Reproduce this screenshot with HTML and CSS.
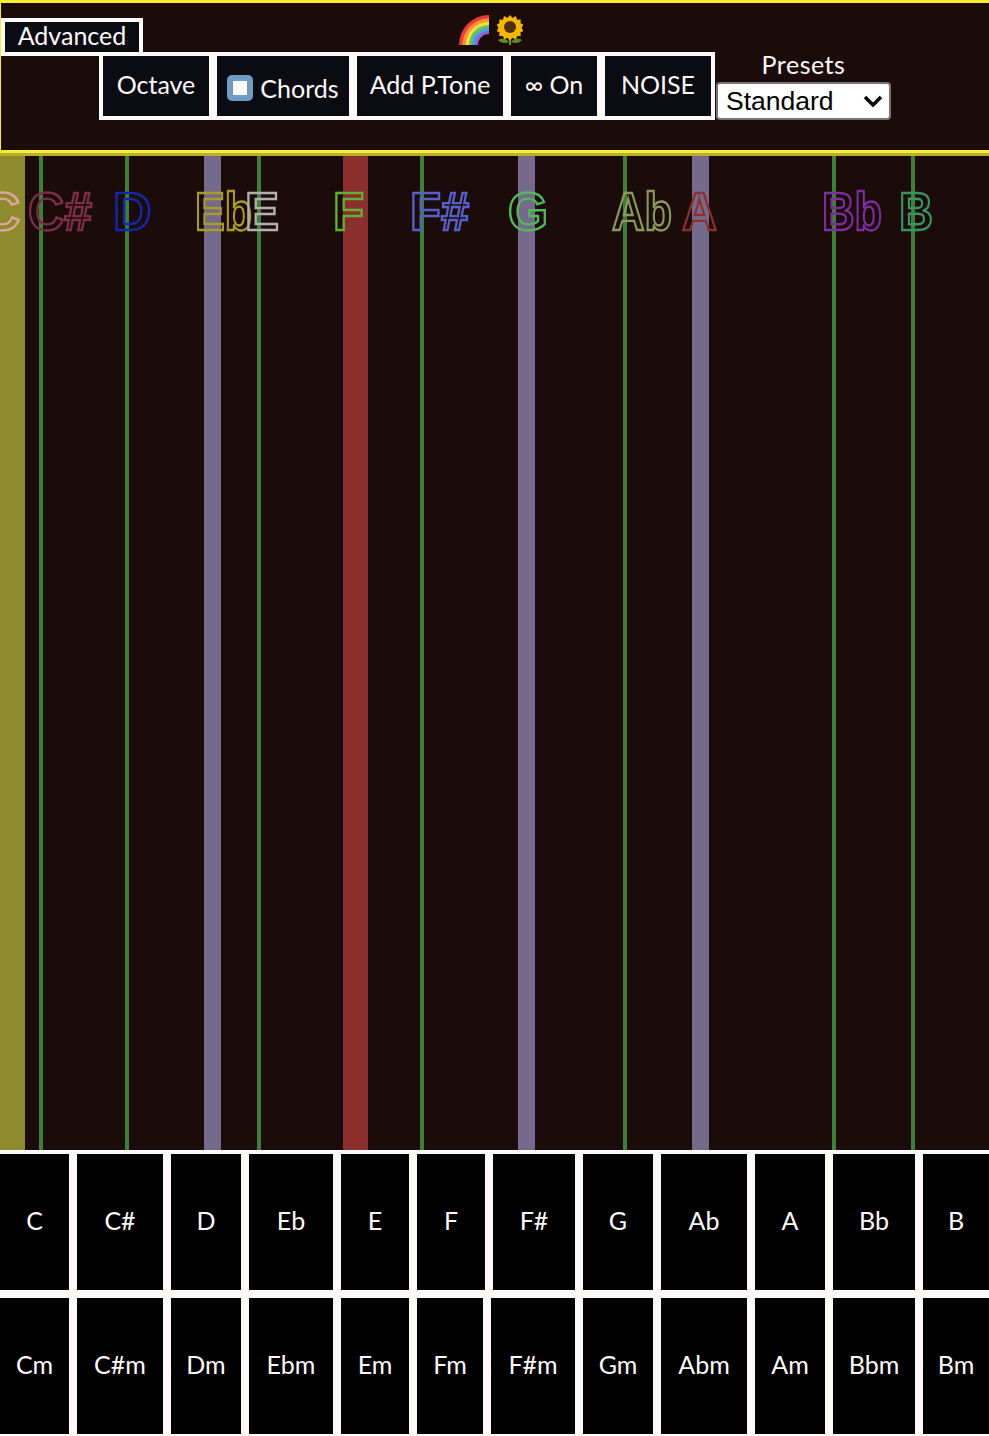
FILE: index.html
```html
<!DOCTYPE html>
<html lang="en">
	<head>
		<meta charset="UTF-8" />
		<title>Chord Strings</title>
		<link rel="stylesheet" href="styles.css">
	</head>
	<body>
		<header class="panel">
			<div class="top-row">
				<button class="ctl advanced">Advanced</button>
				<div class="emojis">
					<svg class="rainbow" viewBox="0 0 30 30" width="30" height="30">
						<path d="M0 30A30 30 0 0 1 30 0V30Z" fill="#ef3b3b"/>
						<path d="M3.500 30A26.500 26.500 0 0 1 30 3.500V30Z" fill="#f59a2c"/>
						<path d="M7 30A23 23 0 0 1 30 7V30Z" fill="#f8e04a"/>
						<path d="M10 30A20 20 0 0 1 30 10V30Z" fill="#62c455"/>
						<path d="M13 30A17 17 0 0 1 30 13V30Z" fill="#4aa3e8"/>
						<path d="M16 30A14 14 0 0 1 30 16V30Z" fill="#9a5fd0"/>
						<path d="M19 30A11 11 0 0 1 30 19V30Z" fill="#1b0c0b"/>
					</svg>
					<svg class="sunflower" viewBox="0 0 26 30" width="26" height="30">
						<path d="M12 21h2v9h-2z" fill="#6f8f1c"/>
						<path d="M12 27C9 23 4 23 1 25c2 3 7 4 11 2zM14 27c3-4 8-4 11-2-2 3-7 4-11 2z" fill="#5f8a1e"/>
						<path d="M13 0l2.500 3 3.500-2 1 3.700 3.800-.2-.3 3.800 3 1.200-2 3.300 2 3.200-3 1.300.3 3.700-3.800-.1-1 3.600-3.500-1.800-2.500 2.800-2.500-2.800-3.500 1.800-1-3.600-3.800.1.300-3.700-3-1.300 2-3.200-2-3.300 3-1.200-.3-3.800 3.800.2 1-3.700 3.500 2z" fill="#f5b800"/>
						<circle cx="13" cy="12" r="6" fill="#4d3108"/>
					</svg>
				</div>
			</div>
			<div class="controls">
				<button class="ctl octave">Octave</button>
				<button class="ctl chords">
					<svg class="stop" viewBox="0 0 26 26" width="26" height="26">
						<rect width="26" height="26" rx="5" fill="#6f9ac2"/>
						<rect x="6" y="6" width="14" height="14" fill="#fff"/>
					</svg>
					Chords
				</button>
				<button class="ctl ptone">Add P.Tone</button>
				<button class="ctl loop">∞ On</button>
				<button class="ctl noise">NOISE</button>
				<div class="presets">
					<label for="preset">Presets</label>
					<div class="select-wrap">
						<select id="preset">
							<option>Standard</option>
						</select>
						<svg class="chevron" viewBox="0 0 20 12" width="20" height="12">
							<path d="M2 2l8 8 8-8" fill="none" stroke="#000" stroke-width="3.500"/>
						</svg>
					</div>
				</div>
			</div>
		</header>

		<svg class="strings" viewBox="0 0 989 994" width="989" height="994">
			<rect class="s-yellow" x="0" y="0" width="25" height="994"/>
			<rect class="s-green" x="39" y="0" width="4" height="994"/>
			<rect class="s-green" x="125" y="0" width="4" height="994"/>
			<rect class="s-violet" x="204" y="0" width="17" height="994"/>
			<rect class="s-green" x="257" y="0" width="4" height="994"/>
			<rect class="s-red" x="343" y="0" width="25" height="994"/>
			<rect class="s-green" x="420" y="0" width="4" height="994"/>
			<rect class="s-violet" x="518" y="0" width="17" height="994"/>
			<rect class="s-green" x="623" y="0" width="4" height="994"/>
			<rect class="s-violet" x="692" y="0" width="17" height="994"/>
			<rect class="s-green" x="832" y="0" width="4" height="994"/>
			<rect class="s-green" x="911" y="0" width="4" height="994"/>

			<text class="note n-c" x="-18" y="74">C</text>
			<text class="note n-cs" x="28" y="74" textLength="64" lengthAdjust="spacingAndGlyphs">C#</text>
			<text class="note n-d" x="113" y="74">D</text>
			<text class="note n-eb" x="195" y="74" textLength="57" lengthAdjust="spacingAndGlyphs">Eb</text>
			<text class="note n-e" x="245" y="74" textLength="34" lengthAdjust="spacingAndGlyphs">E</text>
			<text class="note n-f" x="333" y="74" textLength="31" lengthAdjust="spacingAndGlyphs">F</text>
			<text class="note n-fs" x="410" y="74" textLength="59" lengthAdjust="spacingAndGlyphs">F#</text>
			<text class="note n-g" x="508" y="74" textLength="40" lengthAdjust="spacingAndGlyphs">G</text>
			<text class="note n-ab" x="612" y="74" textLength="60" lengthAdjust="spacingAndGlyphs">Ab</text>
			<text class="note n-a" x="682" y="74" textLength="35" lengthAdjust="spacingAndGlyphs">A</text>
			<text class="note n-bb" x="822" y="74" textLength="60" lengthAdjust="spacingAndGlyphs">Bb</text>
			<text class="note n-b" x="899" y="74" textLength="34" lengthAdjust="spacingAndGlyphs">B</text>
		</svg>

		<div class="pads">
			<div class="pad-row row-major">
				<button class="pad">C</button>
				<button class="pad">C#</button>
				<button class="pad">D</button>
				<button class="pad">Eb</button>
				<button class="pad">E</button>
				<button class="pad">F</button>
				<button class="pad">F#</button>
				<button class="pad">G</button>
				<button class="pad">Ab</button>
				<button class="pad">A</button>
				<button class="pad">Bb</button>
				<button class="pad">B</button>
			</div>
			<div class="pad-row row-minor">
				<button class="pad">Cm</button>
				<button class="pad">C#m</button>
				<button class="pad">Dm</button>
				<button class="pad">Ebm</button>
				<button class="pad">Em</button>
				<button class="pad">Fm</button>
				<button class="pad">F#m</button>
				<button class="pad">Gm</button>
				<button class="pad">Abm</button>
				<button class="pad">Am</button>
				<button class="pad">Bbm</button>
				<button class="pad">Bm</button>
			</div>
		</div>
	</body>
</html>
```

FILE: styles.css
```css
body {
	margin: 0;
	background-color: #fffafa;
	font-family: Lato, "Open Sans", sans-serif;
}
button {
	font-family: inherit;
	padding: 0;
	color: #fffafa;
}
.panel {
	height: 147px;
	background-color: #1b0c0b;
	border-top: 3px solid #f5ee35;
	border-bottom: 3px solid #f5ee35;
	border-left: 1px solid #f5ee35;
}
.top-row {
	display: flex;
	height: 49px;
}
.ctl {
	background-color: #0b0b12;
	border: 4px solid #fffafa;
	font-size: 25px;
	line-height: 30px;
}
.advanced {
	width: 142px;
	height: 38px;
	margin-top: 15px;
	padding-bottom: 4px;
	line-height: 24px;
}
.emojis {
	display: flex;
	gap: 8px;
	margin-top: 12px;
	margin-left: 316px;
	height: 30px;
}
.controls {
	display: flex;
	align-items: flex-end;
	margin-left: 98px;
}
.controls .ctl {
	height: 68px;
	padding-bottom: 4px;
}
.octave { width: 114px; }
.chords {
	width: 140px;
	display: flex;
	align-items: center;
	justify-content: center;
	gap: 7px;
}
.chords.ctl {
	padding-bottom: 0;
	padding-top: 3px;
}
.stop {
	flex: none;
}
.ptone { width: 154px; }
.loop { width: 94px; }
.noise { width: 114px; }
.presets {
	display: flex;
	flex-direction: column;
	width: 175px;
	margin-left: 1px;
	text-align: center;
	color: #fffafa;
	font-size: 25px;
}
.presets label {
	height: 30px;
	line-height: 24px;
	letter-spacing: 0.5px;
}
.select-wrap {
	position: relative;
}
.select-wrap select {
	display: block;
	width: 100%;
	height: 38px;
	padding-left: 8px;
	appearance: none;
	background-color: #fff;
	color: #000;
	border: 2px solid #767676;
	border-radius: 4px;
	font-family: "Liberation Sans", Arial, sans-serif;
	font-size: 26.500px;
}
.chevron {
	position: absolute;
	top: 13px;
	right: 8px;
}
.strings {
	display: block;
	box-sizing: content-box;
	border-top: 3px solid #b5b030;
	background-color: #1b0c0b;
	overflow: hidden;
}
.strings rect {
	filter: blur(0.6px);
}
.note {
	filter: blur(0.6px);
	font-family: "Liberation Sans", Arial, sans-serif;
	font-size: 53px;
	font-weight: bold;
	fill: none;
	stroke-width: 2.400;
}
.s-yellow { fill: #8f8a2e; }
.s-green { fill: #3f7f38; }
.s-violet { fill: #756a8b; }
.s-red { fill: #8a2f2e; }
.n-c { stroke: #d9a79c; }
.n-cs { stroke: #7c2e48; }
.n-d { stroke: #1428a8; }
.n-eb { stroke: #a89c26; }
.n-e { stroke: #b0b0b0; }
.n-f { stroke: #62b034; }
.n-fs { stroke: #5660c8; }
.n-g { stroke: #52b85a; }
.n-ab { stroke: #8a9a58; }
.n-a { stroke: #8f2e2e; }
.n-bb { stroke: #7f2c9f; }
.n-b { stroke: #389460; }
.pads {
	display: flex;
	flex-direction: column;
	gap: 8px;
	padding-top: 4px;
}
.pad-row {
	display: grid;
	column-gap: 8px;
}
.row-major {
	grid-template-columns: 69px 86px 70px 84px 68px 68px 82px 70px 86px 70px 82px 66px;
}
.row-minor {
	grid-template-columns: 69px 86px 70px 84px 68px 66px 84px 70px 86px 70px 82px 66px;
}
.pad {
	height: 136px;
	padding-bottom: 4px;
	background-color: #000;
	border: none;
	font-size: 25px;
}
```
